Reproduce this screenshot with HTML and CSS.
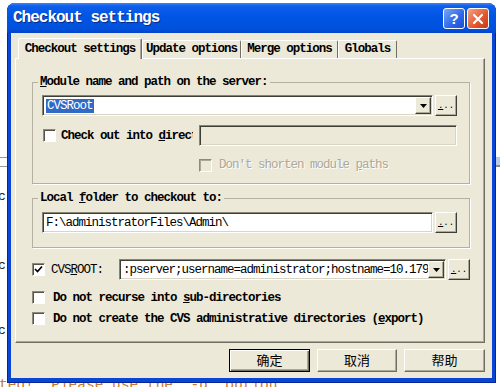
FILE: index.html
```html
<!DOCTYPE html>
<html lang="en">
<head>
  <meta charset="UTF-8">
  <meta name="viewport" content="width=device-width, initial-scale=1.0">
  <title>Checkout settings</title>
  <link rel="stylesheet" href="styles.css">
</head>
<body>
  <div class="desktop">
    <!-- what is left of the page behind the dialog -->
    <div class="bg-strip">
      <div class="bg-rules"></div>
      <div class="bg-blue"></div>
    </div>
    <div class="bg-char bg-c1">c</div>
    <div class="bg-char bg-c2">c</div>
    <div class="bg-char bg-c3">c</div>
    <div class="bg-log">ted!  Please use the '-d' option</div>

    <div class="window">
      <div class="titlebar">
        <span class="title">Checkout settings</span>
        <div class="caption-buttons">
          <span class="cap-btn cap-help">?</span>
          <span class="cap-btn cap-close">
            <svg width="12" height="12" viewBox="0 0 12 12"><path d="M2 2 L10 10 M10 2 L2 10" stroke="#fff" stroke-width="2.2" stroke-linecap="round"/></svg>
          </span>
        </div>
      </div>

      <div class="client">
        <div class="tabs">
          <div class="tab tab-active">Checkout settings</div>
          <div class="tab tab-update">Update options</div>
          <div class="tab tab-merge">Merge options</div>
          <div class="tab tab-globals">Globals</div>
        </div>

        <div class="panel">
          <div class="group">
            <div class="group-title"><u>M</u>odule name and path on the server:</div>
            <div class="row row-first">
              <div class="combo">
                <div class="combo-text"><span class="selected">CVSRoot</span></div>
                <div class="combo-arrow">
                  <svg width="7" height="4" viewBox="0 0 7 4"><path d="M0 0 H7 L3.5 4 Z" fill="#000"/></svg>
                </div>
              </div>
              <div class="btn-small"><u>.</u>..</div>
            </div>
            <div class="row row-dir">
              <div class="check-label">
                <span class="checkbox"></span>
                <span class="label">Check out into <u>d</u>irectory:</span>
              </div>
              <div class="field field-disabled"></div>
            </div>
            <div class="row row-shorten">
              <span class="checkbox checkbox-disabled"></span>
              <span class="label-disabled">Don't shorten module <u>p</u>aths</span>
            </div>
          </div>

          <div class="group group-local">
            <div class="group-title">Local <u>f</u>older to checkout to:</div>
            <div class="row row-first">
              <div class="field">F:\administratorFiles\Admin\</div>
              <div class="btn-small"><u>.</u>..</div>
            </div>
          </div>

          <div class="row row-cvsroot">
            <div class="check-label cvsroot-label">
              <span class="checkbox">
                <svg width="9" height="9" viewBox="0 0 9 9"><path d="M1 4 L3.5 6.5 L8 1.5" stroke="#000" stroke-width="1.7" fill="none"/></svg>
              </span>
              <span class="label-plain">CVS<u>R</u>OOT:</span>
            </div>
            <div class="combo">
              <div class="combo-text">:pserver;username=administrator;hostname=10.179</div>
              <div class="combo-arrow">
                <svg width="7" height="4" viewBox="0 0 7 4"><path d="M0 0 H7 L3.5 4 Z" fill="#000"/></svg>
              </div>
            </div>
            <div class="btn-small"><u>.</u>..</div>
          </div>

          <div class="row row-check row-recurse">
            <span class="checkbox"></span>
            <span class="label">Do not recurse into <u>s</u>ub-directories</span>
          </div>
          <div class="row row-check row-export">
            <span class="checkbox"></span>
            <span class="label">Do not create the CVS administrative directories (<u>e</u>xport)</span>
          </div>
        </div>

        <div class="dialog-buttons">
          <div class="btn btn-default">确定</div>
          <div class="btn btn-cancel">取消</div>
          <div class="btn">帮助</div>
        </div>
      </div>
    </div>
  </div>
</body>
</html>
```

FILE: styles.css
```css
/* XP style "Checkout settings" dialog */
body {
  margin: 0;
  font-family: "Liberation Mono", "DejaVu Sans Mono", monospace;
}

.desktop {
  position: relative;
  width: 500px;
  height: 387px;
  padding-top: 157px;
  box-sizing: border-box;
  overflow: hidden;
  background: #fff;
}

/* background page */
.bg-strip {
  display: flex;
  justify-content: space-between;
  height: 10px;
}

.bg-rules {
  width: 7px;
  height: 8px;
  border-top: 1px solid #9a9a9a;
  border-bottom: 1px solid #9a9a9a;
}

.bg-blue {
  width: 4px;
  background: #b9cbe8;
  border-bottom: 2px solid #8a8a8a;
}

.bg-char {
  font-size: 13px;
  line-height: 13px;
  color: #222;
  margin-left: -2px;
}

.bg-c1 { margin-top: 23px; }
.bg-c2 { margin-top: 56px; }
.bg-c3 { margin-top: 52px; }

.bg-log {
  margin-top: 40px;
  margin-left: -1px;
  font-size: 14.5px;
  line-height: 17px;
  color: #c7772c;
  white-space: pre;
}

/* window frame */
.window {
  position: absolute;
  left: 7px;
  top: 3px;
  width: 489px;
  height: 380px;
  display: flex;
  flex-direction: column;
  background: #0b45d3;
  border-radius: 8px 8px 0 0;
  box-shadow: inset 1px 0 #06259a, inset -1px -1px #06259a;
}

.titlebar {
  height: 30px;
  flex-shrink: 0;
  display: flex;
  align-items: center;
  justify-content: space-between;
  padding: 0 7px 0 6px;
  border-radius: 8px 8px 0 0;
  background: linear-gradient(to bottom, #3d86f8 0%, #0f5eea 10%, #0055e4 45%, #0052dd 85%, #0445c9 100%);
}

.title {
  color: #fff;
  font-size: 16px;
  font-weight: bold;
  letter-spacing: -1px;
  text-shadow: 1px 1px #0b2a8a;
}

.caption-buttons {
  display: flex;
  gap: 2px;
  margin-top: 1px;
}

.cap-btn {
  width: 22px;
  height: 21px;
  box-sizing: border-box;
  display: flex;
  align-items: center;
  justify-content: center;
  border: 1px solid #fff;
  border-radius: 3px;
  color: #fff;
  font: bold 15px "Liberation Sans", sans-serif;
}

.cap-help {
  background: linear-gradient(135deg, #7aa6fa, #2d66e8 60%, #1d4fd0);
}

.cap-close {
  background: linear-gradient(135deg, #f5a283, #e2552d 60%, #c43b17);
}

.client {
  flex: 1;
  margin: 0 4px 5px 4px;
  padding: 5px 7px 0 4px;
  background: #ece9d8;
  font-size: 12.5px;
  letter-spacing: -1px;
  color: #000;
}

/* tabs */
.tabs {
  display: flex;
  align-items: flex-end;
  height: 20px;
  padding-left: 3px;
}

.tab {
  box-sizing: border-box;
  height: 18px;
  border-top: 1px solid #fff;
  border-left: 1px solid #fff;
  border-right: 1px solid #716f64;
  border-radius: 2px 2px 0 0;
  text-align: center;
  font-weight: bold;
  line-height: 17px;
  white-space: nowrap;
}

.tab-active {
  position: relative;
  z-index: 1;
  width: 124px;
  height: 21px;
  margin-bottom: -1px;
  padding-top: 2px;
  background: #ece9d8;
  box-shadow: inset -1px 0 #aca899;
}

.tab-update { width: 99px; }
.tab-merge { width: 97px; }
.tab-globals { width: 59px; }

.panel {
  height: 285px;
  box-sizing: border-box;
  padding: 23px 14px 0 16px;
  border: 1px solid;
  border-color: #fff #716f64 #716f64 #fff;
  box-shadow: inset -1px -1px #aca899;
}

/* group boxes */
.group {
  padding: 0 12px 11px 9px;
  border: 1px solid #b4b1a2;
  box-shadow: 1px 1px #fff;
}

.group-local {
  margin-top: 14px;
  padding-bottom: 14px;
}

.group-title {
  width: fit-content;
  margin: -7px 0 0 -4px;
  padding: 0 2px;
  line-height: 13px;
  font-weight: bold;
  background: #ece9d8;
}

.row {
  display: flex;
  align-items: center;
  gap: 2px;
  height: 21px;
}

.row-first { margin-top: 6px; }
.group-local .row-first { margin-top: 7px; }
.row-dir { margin-top: 9px; gap: 6px; }

.row-shorten {
  margin-top: 12px;
  height: 14px;
  padding-left: 157px;
}

.row-cvsroot {
  margin-top: 11px;
  gap: 2px;
}

.row-check {
  height: 13px;
}

.row-recurse { margin-top: 11px; }
.row-export { margin-top: 8px; }

.check-label {
  width: 151px;
  flex-shrink: 0;
  display: flex;
  align-items: center;
  overflow: hidden;
  white-space: nowrap;
}

.row-dir .checkbox { margin-left: 1px; }

.cvsroot-label {
  width: 85px;
}

.label {
  margin-left: 5px;
  font-weight: bold;
  white-space: nowrap;
}

.label-plain {
  margin-left: 6px;
}

.label-disabled {
  margin-left: 5px;
  color: #aca899;
  text-shadow: 1px 1px #fff;
  white-space: nowrap;
}

.row-check .label {
  margin-left: 6px;
}

/* controls */
.checkbox {
  width: 13px;
  height: 13px;
  flex-shrink: 0;
  box-sizing: border-box;
  display: flex;
  align-items: center;
  justify-content: center;
  background: #fff;
  border: 1px solid;
  border-color: #8c8a7c #fff #fff #8c8a7c;
  box-shadow: inset 1px 1px #55534a;
}

.checkbox-disabled {
  background: #ece9d8;
  box-shadow: inset 1px 1px #aca899;
}

.combo,
.field {
  flex: 1;
  min-width: 0;
  height: 21px;
  box-sizing: border-box;
  display: flex;
  align-items: center;
  background: #fff;
  border: 1px solid;
  border-color: #868472 #fff #fff #868472;
  box-shadow: inset 1px 1px #3f3e36, inset -1px -1px #d8d5c6;
  white-space: nowrap;
  overflow: hidden;
}

.combo {
  padding: 1px;
}

.combo-text {
  flex: 1;
  min-width: 0;
  overflow: hidden;
  padding-left: 2px;
}

.selected {
  background: #316ac5;
  color: #fff;
  padding: 0 1px;
}

.combo-arrow {
  width: 16px;
  height: 17px;
  flex-shrink: 0;
  box-sizing: border-box;
  display: flex;
  align-items: center;
  justify-content: center;
  background: #ece9d8;
  border: 1px solid;
  border-color: #fff #3f3e36 #3f3e36 #fff;
  box-shadow: inset -1px -1px #aca899;
}

.field {
  padding-left: 3px;
}

.field-disabled {
  background: #ece9d8;
}

.btn-small {
  width: 22px;
  height: 21px;
  flex-shrink: 0;
  box-sizing: border-box;
  display: flex;
  align-items: flex-end;
  justify-content: center;
  padding-bottom: 4px;
  font-size: 9px;
  line-height: 10px;
  letter-spacing: 0;
  background: #ece9d8;
  border: 1px solid;
  border-color: #fff #3f3e36 #3f3e36 #fff;
  box-shadow: inset -1px -1px #aca899;
}

/* OK / Cancel / Help */
.dialog-buttons {
  display: flex;
  justify-content: flex-end;
  gap: 7px;
  margin-top: 6px;
}

.btn {
  width: 81px;
  height: 23px;
  box-sizing: border-box;
  text-align: center;
  font-family: "Noto Sans CJK SC", sans-serif;
  font-size: 13px;
  line-height: 20px;
  letter-spacing: 0;
  border: 1px solid;
  border-color: #fff #716f64 #716f64 #fff;
  box-shadow: inset -1px -1px #aca899;
}

.btn-cancel {
  width: 80px;
}

.btn-default {
  border-color: #000;
  box-shadow: inset 1px 1px #fff, inset -1px -1px #716f64, inset -2px -2px #aca899;
}
```
